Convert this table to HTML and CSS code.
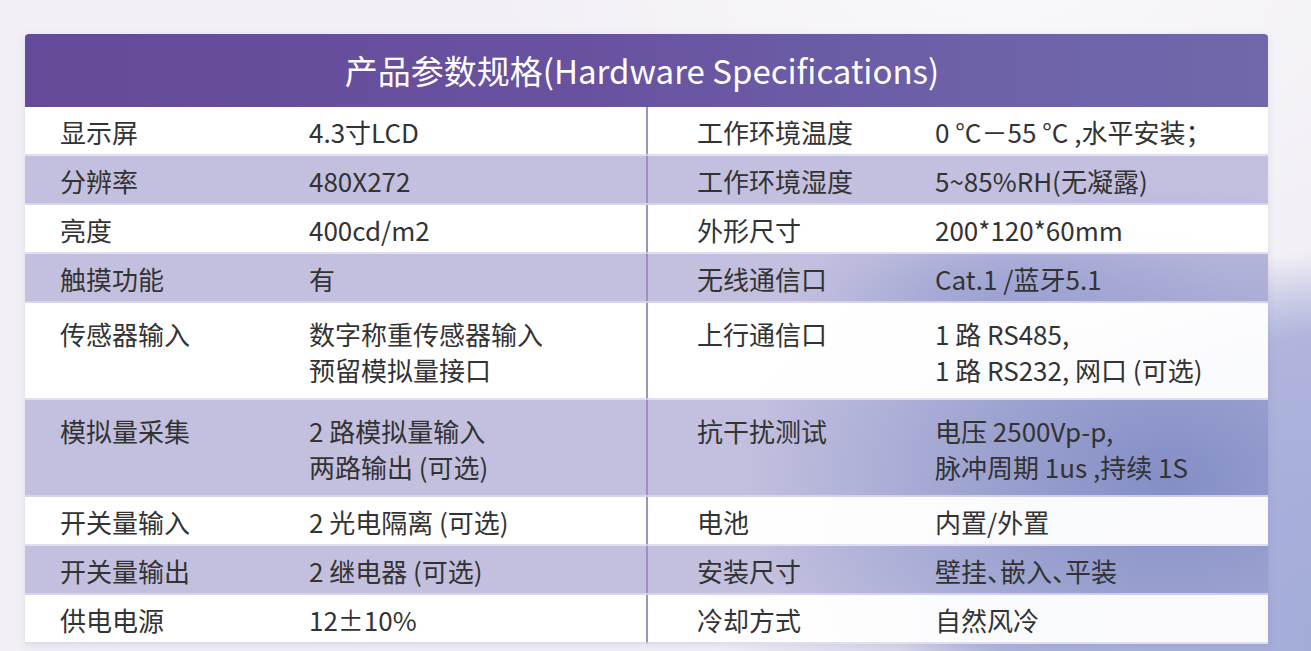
FILE: index.html
```html
<!DOCTYPE html>
<html lang="zh-CN">
<head>
<meta charset="utf-8">
<title>产品参数规格</title>
<link rel="stylesheet" href="styles.css">
</head>
<body>
<div class="spec">
  <div class="spec-head">产品参数规格(Hardware Specifications)</div>
  <div class="spec-body">
    <div class="row">
      <div class="k">显示屏</div><div class="v">4.3寸LCD</div>
      <div class="k2">工作环境温度</div><div class="v">0 °C－55 °C ,水平安装；</div>
    </div>
    <div class="row alt">
      <div class="k">分辨率</div><div class="v">480X272</div>
      <div class="k2">工作环境湿度</div><div class="v">5~85%RH(无凝露)</div>
    </div>
    <div class="row">
      <div class="k">亮度</div><div class="v">400cd/m2</div>
      <div class="k2">外形尺寸</div><div class="v">200*120*60mm</div>
    </div>
    <div class="row alt">
      <div class="k">触摸功能</div><div class="v">有</div>
      <div class="k2">无线通信口</div><div class="v">Cat.1 /蓝牙5.1</div>
    </div>
    <div class="row tall">
      <div class="k">传感器输入</div><div class="v">数字称重传感器输入<br>预留模拟量接口</div>
      <div class="k2">上行通信口</div><div class="v">1 路 RS485,<br>1 路 RS232, 网口 (可选)</div>
    </div>
    <div class="row alt tall">
      <div class="k">模拟量采集</div><div class="v">2 路模拟量输入<br>两路输出 (可选)</div>
      <div class="k2">抗干扰测试</div><div class="v">电压 2500Vp-p,<br>脉冲周期 1us ,持续 1S</div>
    </div>
    <div class="row">
      <div class="k">开关量输入</div><div class="v">2 光电隔离 (可选)</div>
      <div class="k2">电池</div><div class="v">内置/外置</div>
    </div>
    <div class="row alt">
      <div class="k">开关量输出</div><div class="v">2 继电器 (可选)</div>
      <div class="k2">安装尺寸</div><div class="v">壁挂<span class="halt">、</span>嵌入<span class="halt">、</span>平装</div>
    </div>
    <div class="row">
      <div class="k">供电电源</div><div class="v">12±10%</div>
      <div class="k2">冷却方式</div><div class="v">自然风冷</div>
    </div>
  </div>
</div>
</body>
</html>
```
FILE: styles.css
```css
html, body {
  margin: 0;
  height: 651px;
  overflow: hidden;
}
body {
  padding: 34px 43px 0 25px;
  box-sizing: border-box;
  font-family: "Noto Sans CJK SC", "Noto Sans", sans-serif;
  background:
    radial-gradient(ellipse 520px 300px at 1000px -40px, rgba(255,255,255,0.55), rgba(255,255,255,0) 100%),
    radial-gradient(ellipse 520px 410px at 1420px 650px, rgba(160,170,215,1) 0%, rgba(170,176,218,0.9) 80%, rgba(175,180,220,0) 100%),
    radial-gradient(ellipse 420px 330px at 1120px 560px, rgba(135,145,200,0.6), rgba(135,145,200,0) 100%),
    #f2f0f6;
}
.spec {
  width: 1243px;
  box-shadow: 0 2px 8px rgba(90, 80, 140, 0.12);
  border-radius: 4px 4px 0 0;
}
.spec-head {
  height: 73px;
  display: flex;
  align-items: center;
  justify-content: center;
  padding: 0 9px 2px 0;
  box-sizing: border-box;
  color: #ffffff;
  font-size: 33px;
  border-radius: 4px 4px 0 0;
  background: linear-gradient(90deg, #654a99 0%, #6852a0 45%, #6e63a9 80%, #7068ab 100%);
}
.row {
  display: grid;
  grid-template-columns: 284px 339px 287px 333px;
  height: 49px;
  box-sizing: border-box;
  align-content: center;
  align-items: start;
  font-size: 26px;
  line-height: 36px;
  color: #333333;
  background:
    linear-gradient(#a18fbf, #a18fbf) 621px 0 / 2px 100% no-repeat,
    rgba(255, 255, 255, 0.94);
  box-shadow: inset 0 -2px 0 rgba(214, 211, 234, 0.75);
}
.row.tall {
  height: 97px;
}
.row.alt {
  background:
    linear-gradient(#a18fbf, #a18fbf) 621px 0 / 2px 100% no-repeat,
    radial-gradient(ellipse 430px 300px at 1170px 480px, rgba(132,142,198,1) 0%, rgba(140,150,202,0.75) 40%, rgba(195,192,223,0) 100%) fixed,
    radial-gradient(ellipse 220px 90px at 1000px 300px, rgba(150,158,208,0.7), rgba(150,158,208,0) 100%) fixed,
    #c3c0df;
  box-shadow: inset 0 -2px 0 rgba(220, 218, 238, 0.8);
}
.k {
  padding-left: 35px;
}
.k2 {
  padding-left: 49px;
}
.v {
  white-space: nowrap;
}
.halt {
  font-feature-settings: "halt" 1;
}
```
